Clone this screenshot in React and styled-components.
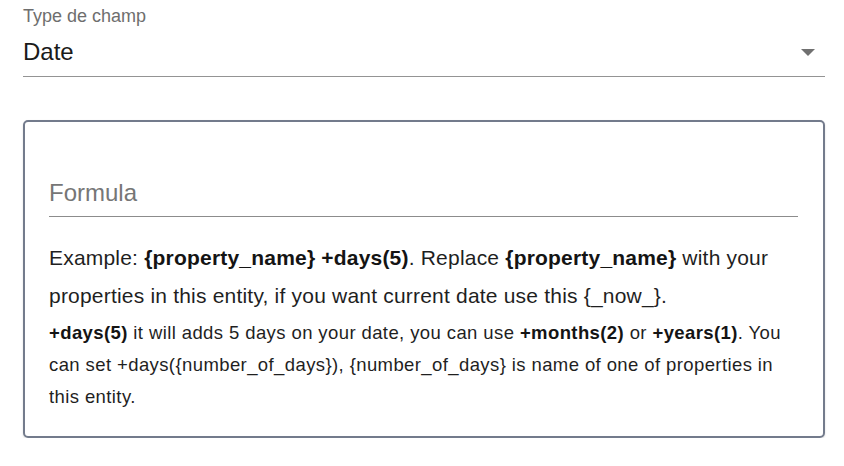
import React from "react";
import styled, { createGlobalStyle } from "styled-components";

const GlobalStyle = createGlobalStyle`
  html, body {
    margin: 0;
    padding: 0;
    background: #ffffff;
  }
  body {
    font-family: "Liberation Sans", Arial, sans-serif;
    color: #1f1f1f;
  }
`;

const Page = styled.div`
  width: 844px;
  box-sizing: border-box;
  padding: 4px 19px 0 23px;
`;

const FieldLabel = styled.div`
  font-size: 18px;
  line-height: 24px;
  color: #6e6e6e;
`;

const SelectRow = styled.div`
  display: flex;
  align-items: center;
  justify-content: space-between;
  margin-top: 8px;
  padding-bottom: 8px;
  border-bottom: 1px solid #949494;
`;

const SelectValue = styled.span`
  font-size: 24px;
  line-height: 32px;
  color: #1a1a1a;
`;

const Caret = styled.svg`
  width: 14px;
  height: 7px;
  margin-right: 10px;
  fill: #707070;
`;

const Card = styled.div`
  margin-top: 43px;
  height: 318px;
  box-sizing: border-box;
  border: 2px solid #737b8c;
  border-radius: 5px;
  box-shadow: 0 1px 2px rgba(0, 0, 0, 0.15);
  padding: 55px 25px 0 24px;
`;

const Input = styled.div`
  font-size: 24px;
  line-height: 32px;
  color: #767676;
  padding-bottom: 7px;
  border-bottom: 1px solid #8c8c8c;
`;

const Hint = styled.p`
  margin: ${(p) => p.$top}px 0 0;
  font-size: ${(p) => p.$size}px;
  line-height: ${(p) => p.$lh}px;
  letter-spacing: ${(p) => p.$track}px;
  color: #1f1f1f;

  b {
    font-weight: bold;
    color: #141414;
  }
`;

export default function App() {
  return (
    <>
      <GlobalStyle />
      <Page>
        <FieldLabel>Type de champ</FieldLabel>
        <SelectRow>
          <SelectValue>Date</SelectValue>
          <Caret viewBox="0 0 14 7">
            <path d="M0 0h14L7 7z" />
          </Caret>
        </SelectRow>
        <Card>
          <Input>Formula</Input>
          <Hint $top={22} $size={21} $lh={38} $track={0.2}>
            Example: <b>{"{property_name}"} +days(5)</b>. Replace{" "}
            <b>{"{property_name}"}</b> with your properties in this entity, if
            you want current date use this {"{_now_}"}.
          </Hint>
          <Hint $top={2} $size={18.5} $lh={32} $track={0.4}>
            <b>+days(5)</b> it will adds 5 days on your date, you can use{" "}
            <b>+months(2)</b> or <b>+years(1)</b>. You can set
            +days({"{number_of_days}"}), {"{number_of_days}"} is name of one of
            properties in this entity.
          </Hint>
        </Card>
      </Page>
    </>
  );
}
